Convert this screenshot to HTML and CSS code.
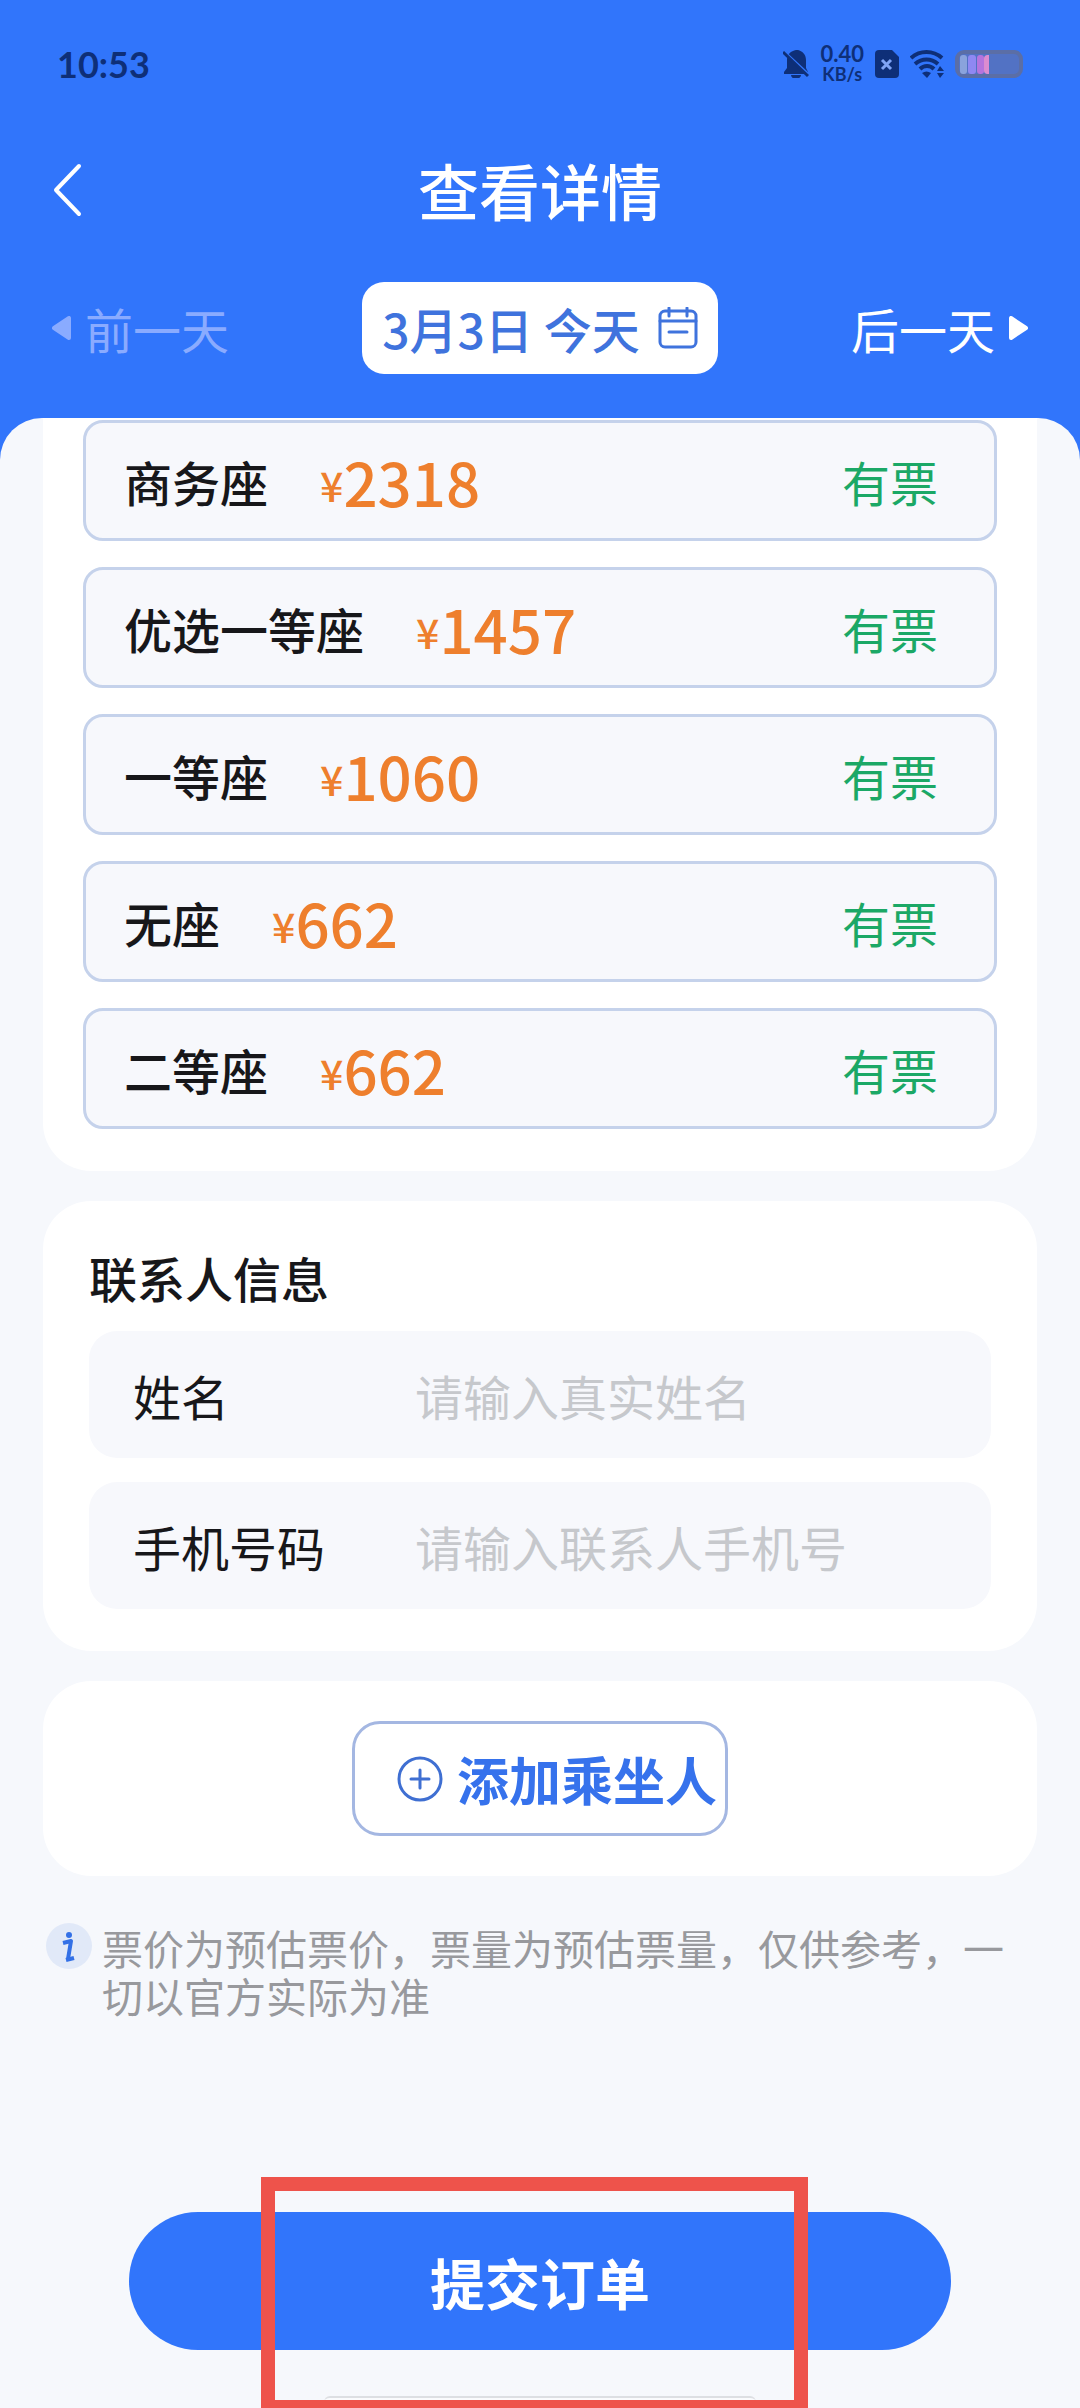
FILE: index.html
```html
<!DOCTYPE html>
<html lang="zh-CN">
<head>
    <meta charset="UTF-8">
    <meta name="viewport" content="width=device-width, initial-scale=1.0">
    <title>查看详情</title>
    <link rel="stylesheet" href="styles.css">
</head>
<body>
    <div class="app-wrap">
      <header>
        <div class="status-bar">
          <span class="clock">10:53</span>
          <div class="status-icons">
            <svg class="bell" viewBox="0 0 26 28">
              <path d="M13 0C8 1 4 4 4 10v8l-3 4v2h24v-2l-2-4v-8c0-6-4-9-8-10z" fill="#0e2f78"/>
              <path d="M8 25h10a5 4 0 0 1-10 0z" fill="#0e2f78"/>
              <path d="M-1 0L27 26" stroke="#3175fb" stroke-width="3"/>
              <path d="M0 2L25 26" stroke="#0e2f78" stroke-width="3"/>
            </svg>
            <div class="speed"><span class="num">0.40</span><span class="unit">KB/s</span></div>
            <svg class="sim" viewBox="0 0 24 28">
              <path d="M4 0h13l7 7v17a4 4 0 0 1-4 4H4a4 4 0 0 1-4-4V4a4 4 0 0 1 4-4z" fill="#0e2f78"/>
              <path d="M7 10l9 9M16 10l-9 9" stroke="#7fa4f5" stroke-width="3"/>
            </svg>
            <svg class="wifi" viewBox="0 0 34 28">
              <g fill="none" stroke="#0e2f78" stroke-width="4">
                <path d="M1 8C10 0 23 0 32 8"/>
                <path d="M5 14c7-6 16-6 23 0"/>
                <path d="M10 19c4-4 10-4 14 0"/>
              </g>
              <path d="M12 23c3-2 6-2 9 0l-4 5z" fill="#0e2f78"/>
              <path d="M27 21l3-5 4 5zM27 23h7l-4 5z" fill="#0e2f78"/>
            </svg>
            <svg class="battery" viewBox="0 0 68 28">
              <rect x="2" y="2" width="64" height="24" rx="7" fill="#5272c4" stroke="#5b6ea6" stroke-width="4"/>
              <rect x="5" y="5" width="7" height="19" rx="3" fill="#8aa3dc"/>
              <rect x="13" y="5" width="8" height="19" rx="3" fill="#8f88f2"/>
              <rect x="22" y="5" width="7" height="19" rx="3" fill="#b574dd"/>
              <path d="M34 5c-5 0-5 2-5 5v9c0 3 0 5 5 5z" fill="#dc8cd0"/>
            </svg>
          </div>
        </div>
        <div class="title-bar">
          <button class="back" type="button" aria-label="返回">
            <svg viewBox="0 0 30 54"><path d="M27 3L4 27l23 24" fill="none" stroke="#fff" stroke-width="4" stroke-linecap="round" stroke-linejoin="round"/></svg>
          </button>
          <h1>查看详情</h1>
        </div>
        <nav class="day-bar">
          <button class="day prev" type="button" disabled>
            <svg class="arrow" viewBox="0 0 20 24"><path d="M17 2v20L2 12z" fill="#8aabff" stroke="#8aabff" stroke-width="4" stroke-linejoin="round"/></svg>
            <span>前一天</span>
          </button>
          <button class="date" type="button">
            <span>3月3日 今天</span>
            <svg viewBox="0 0 40 42" fill="none" stroke="#3f73dd" stroke-width="3" stroke-linecap="round">
              <rect x="2" y="4" width="36" height="36" rx="5"/>
              <path d="M2 14h36M11 25h18"/>
              <path d="M11 1v8M29 1v8"/>
            </svg>
          </button>
          <button class="day next" type="button">
            <span>后一天</span>
            <svg class="arrow" viewBox="0 0 20 24"><path d="M3 2v20l15-10z" fill="#fff" stroke="#fff" stroke-width="4" stroke-linejoin="round"/></svg>
          </button>
        </nav>
      </header>

      <main>
        <ul class="card seats">
          <li class="seat"><span class="type">商务座</span><span class="price"><span class="yen">¥</span>2318</span><span class="stock">有票</span></li>
          <li class="seat"><span class="type">优选一等座</span><span class="price"><span class="yen">¥</span>1457</span><span class="stock">有票</span></li>
          <li class="seat"><span class="type">一等座</span><span class="price"><span class="yen">¥</span>1060</span><span class="stock">有票</span></li>
          <li class="seat"><span class="type">无座</span><span class="price"><span class="yen">¥</span>662</span><span class="stock">有票</span></li>
          <li class="seat"><span class="type">二等座</span><span class="price"><span class="yen">¥</span>662</span><span class="stock">有票</span></li>
        </ul>

        <section class="card contact">
          <h2>联系人信息</h2>
          <div class="field">
            <label for="name">姓名</label>
            <input type="text" id="name" autocomplete="off" placeholder="请输入真实姓名">
          </div>
          <div class="field">
            <label for="phone">手机号码</label>
            <input type="tel" id="phone" autocomplete="off" placeholder="请输入联系人手机号">
          </div>
        </section>

        <section class="card passenger">
          <button class="add" type="button">
            <svg viewBox="0 0 46 46" fill="none" stroke="#3f6fd2">
              <circle cx="23" cy="23" r="21" stroke-width="3"/>
              <path d="M14 23h18M23 14v18" stroke-width="3" stroke-linecap="round"/>
            </svg>
            <span>添加乘坐人</span>
          </button>
        </section>

        <div class="tip">
          <svg viewBox="0 0 46 46">
            <circle cx="23" cy="23" r="23" fill="#e1e9f8"/>
            <circle cx="23" cy="12" r="3" fill="#3370e6"/>
            <path d="M17 20l8-2-3 18" fill="none" stroke="#3370e6" stroke-width="4" stroke-linejoin="round"/>
            <path d="M20 37l8-2" stroke="#3370e6" stroke-width="4"/>
          </svg>
          <p>票价为预估票价，票量为预估票量，仅供参考，一切以官方实际为准</p>
        </div>

        <footer>
          <button class="submit" type="button">提交订单</button>
          <div class="home-bar"></div>
          <div class="mark"></div>
        </footer>
      </main>
    </div>
</body>
</html>
```
FILE: styles.css
```css
* {
  margin: 0;
  padding: 0;
  box-sizing: border-box;
}

body {
  font-family: "Noto Sans CJK SC", sans-serif;
  font-size: 48px;
  line-height: 60px;
  color: #17171a;
  background-color: #3175fb;
}

button,
input {
  font: inherit;
  color: inherit;
  border: none;
  outline: none;
  background: none;
}

svg {
  display: block;
  flex: none;
}

.app-wrap {
  min-height: 100vh;
  display: flex;
  flex-direction: column;
}

/* header */
header {
  padding: 40px 52px 44px;
}

.status-bar {
  display: flex;
  justify-content: space-between;
  align-items: center;
  height: 48px;
  padding: 0 5px;
  font-family: Lato, sans-serif;
  color: #0e2f78;
}

.clock {
  font-size: 36px;
  font-weight: 700;
}

.status-icons {
  display: flex;
  align-items: center;
  gap: 11px;
}

.bell {
  width: 26px;
  height: 28px;
}

.speed {
  display: flex;
  flex-direction: column;
  align-items: center;
  line-height: 20px;
  font-weight: 700;
}

.speed .num {
  font-size: 22px;
}

.speed .unit {
  font-size: 18px;
}

.sim {
  width: 24px;
  height: 28px;
}

.wifi {
  width: 34px;
  height: 28px;
}

.battery {
  width: 68px;
  height: 28px;
}

.title-bar {
  display: grid;
  grid-template-columns: 1fr auto 1fr;
  align-items: center;
  margin-top: 62px;
}

.back {
  justify-self: start;
}

.back svg {
  width: 30px;
  height: 54px;
}

.title-bar h1 {
  font-size: 61px;
  font-weight: 500;
  line-height: 80px;
  color: #fff;
}

.day-bar {
  display: grid;
  grid-template-columns: 1fr auto 1fr;
  align-items: center;
  margin-top: 52px;
}

.day {
  display: flex;
  align-items: center;
  gap: 13px;
  color: #fff;
}

.prev {
  color: #8aabff;
}

.next {
  justify-self: end;
}

.arrow {
  width: 20px;
  height: 24px;
}

.date {
  display: flex;
  align-items: center;
  gap: 18px;
  height: 92px;
  padding: 0 20px;
  border-radius: 22px;
  font-weight: 500;
  color: #3f73dd;
  background-color: #fff;
}

.date svg {
  width: 40px;
  height: 42px;
}

/* content */
main {
  flex: 1 1 auto;
  display: flex;
  flex-direction: column;
  gap: 30px;
  border-radius: 42px 42px 0 0;
  background-color: #f6f8fc;
  overflow: hidden;
}

.card {
  margin: 0 43px;
  border-radius: 48px;
  background-color: #fff;
}

.seats {
  display: flex;
  flex-direction: column;
  gap: 26px;
  padding: 2px 40px 42px;
  border-radius: 0 0 48px 48px;
  list-style: none;
}

.seat {
  display: flex;
  align-items: center;
  height: 121px;
  padding: 0 56px 0 38px;
  border: 3px solid #c5d2eb;
  border-radius: 20px;
  background-color: #f7f8fc;
}

.type {
  font-weight: 500;
}

.price {
  display: flex;
  align-items: center;
  margin-left: 52px;
  font-size: 60px;
  font-weight: 500;
  color: #ee7f2d;
}

.yen {
  padding-top: 6px;
  font-size: 41px;
}

.stock {
  margin-left: auto;
  color: #1ba866;
}

.contact {
  display: flex;
  flex-direction: column;
  gap: 24px;
  padding: 46px 46px 42px;
}

.contact h2 {
  font-size: 48px;
  font-weight: 500;
}

.field {
  display: flex;
  align-items: center;
  height: 127px;
  padding: 0 44px;
  border-radius: 28px;
  background-color: #f7f8fc;
}

.field label {
  flex: none;
  width: 282px;
}

.field input {
  flex: 1 1 auto;
  min-width: 0;
}

.field input::placeholder {
  color: #c6c8cc;
  opacity: 1;
}

.passenger {
  display: flex;
  justify-content: center;
  padding: 40px;
}

.add {
  display: flex;
  align-items: center;
  gap: 14px;
  height: 115px;
  padding: 0 8px 0 42px;
  border: 3px solid #a4b7e2;
  border-radius: 28px;
  font-size: 52px;
  font-weight: 700;
  color: #3672ec;
}

.add svg {
  width: 46px;
  height: 46px;
}

.tip {
  display: flex;
  gap: 10px;
  padding: 17px 46px 0;
  font-size: 41px;
  line-height: 48px;
  color: #98999d;
}

.tip svg {
  width: 46px;
  height: 46px;
}

footer {
  position: relative;
  margin-top: auto;
  padding: 0 129px 58px;
}

.submit {
  display: block;
  width: 100%;
  height: 138px;
  border-radius: 69px;
  font-size: 55px;
  font-weight: 700;
  color: #fff;
  background-color: #3175fb;
}

/* overlays on top of the submit button */
.home-bar {
  position: absolute;
  left: 30%;
  right: 30%;
  bottom: 0;
  height: 12px;
  border-top: 2px solid #dddfe3;
  border-radius: 6px;
  background-color: #fafbfd;
}

.mark {
  position: absolute;
  top: -35px;
  left: 261px;
  right: 272px;
  bottom: -6px;
  border: 14px solid #ee534b;
}
```
